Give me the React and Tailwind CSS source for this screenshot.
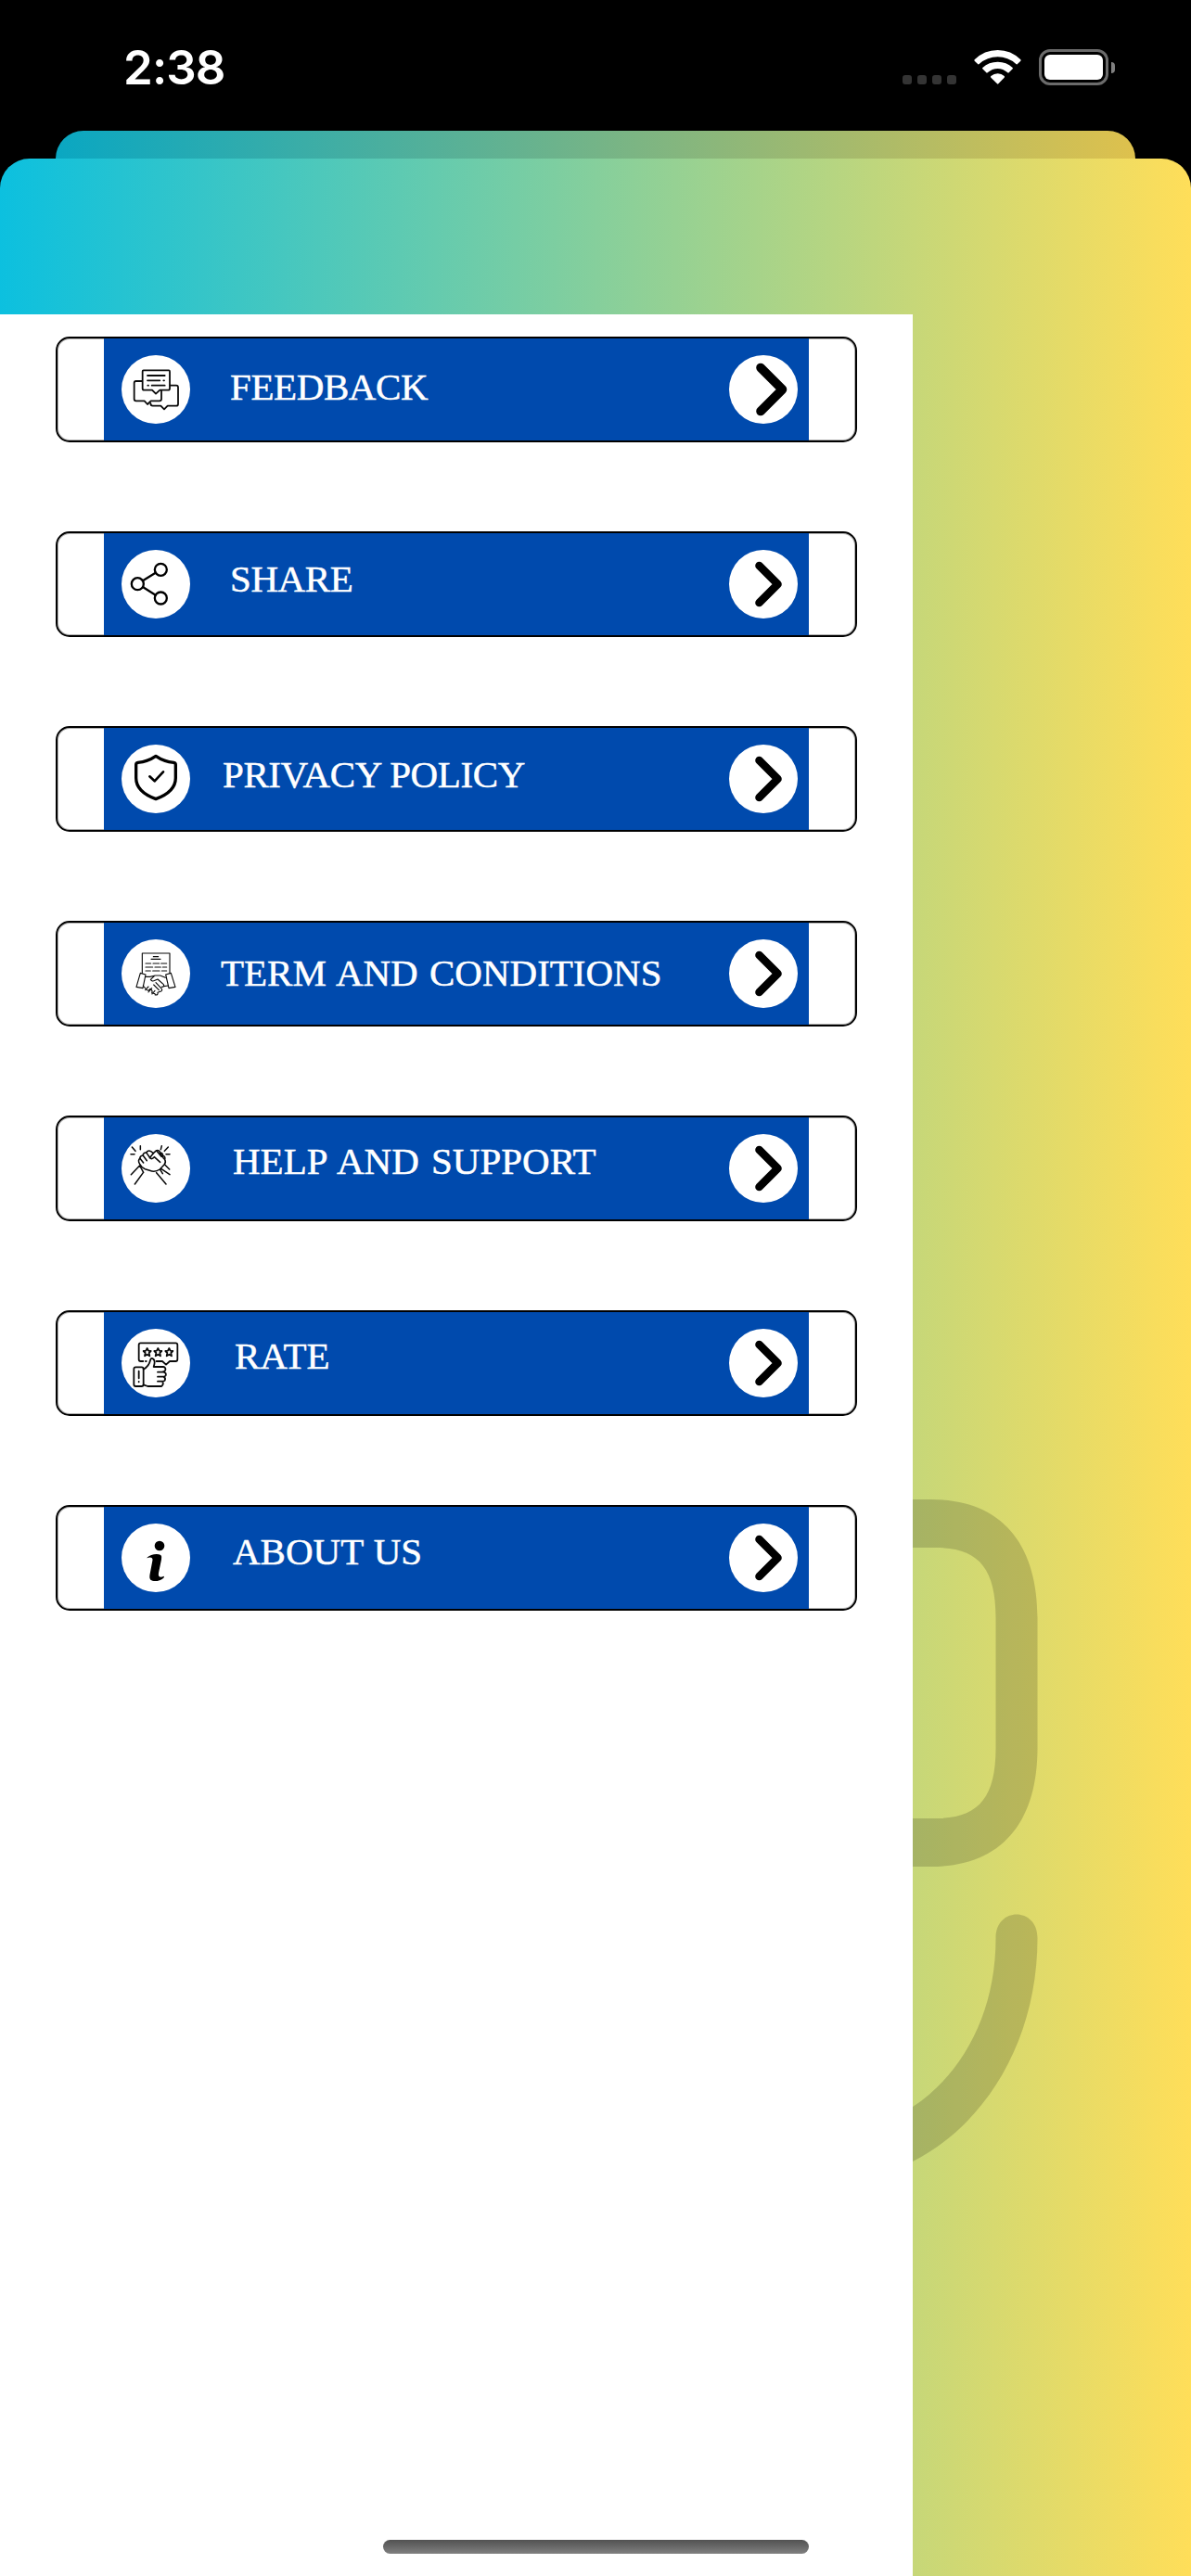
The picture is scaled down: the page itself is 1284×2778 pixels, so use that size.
const line = {
  fill: "none",
  stroke: "#0a0a0a",
  strokeWidth: 5.4,
  strokeLinecap: "round",
  strokeLinejoin: "round",
};

function FeedbackIcon() {
  return (
    <g {...line}>
      <path d="M346 147H428Q431 147 431 151V206Q431 211 426 211H399L386 223L374 211H348Q343 211 343 206V151Q343 147 346 147Z" />
      <path d="M341 182H322Q316 182 316 188V240Q316 246 322 246H349L359 257L370 246H398Q404 246 404 240V213" />
      <path d="M433 196H452Q458 196 458 202V256Q458 262 452 262H424L413 273L402 262H376Q369 262 369 254" />
      <path d="M359 164H415M359 180H399M411 180H413M360 196H362M373 196H415" />
    </g>
  );
}

function ShareIcon() {
  return (
    <g {...line} stroke="#000" strokeWidth={7}>
      <circle cx="402" cy="162" r="19.5" />
      <circle cx="327" cy="208" r="19.5" />
      <circle cx="402" cy="254" r="19.5" />
      <path d="M345 197L385 172M345 219L385 244" />
    </g>
  );
}

function PrivacyIcon() {
  return (
    <g {...line} stroke="#000" strokeWidth={10}>
      <path d="M386 135C370 146 350 154 328 156Q322 157 322 163V206C322 238 348 260 386 274C424 260 450 238 450 206V163Q450 157 444 156C422 154 402 146 386 135Z" />
      <path d="M366 201L382 216L410 186" strokeWidth={8} />
    </g>
  );
}

function TermsIcon() {
  return (
    <g {...line} strokeWidth={3.4}>
      <path d="M342 207V143H431V207" />
      <path d="M378 154H394M371 162H401M353 176H370M377 176H397M403 176H421M353 188H376M383 188H402M408 188H421M353 200H369M376 200H398M405 200H421" />
      <path d="M336 207L353 212L344 256L323 252ZM435 207L418 212L428 256L449 252Z" />
      <path d="M353 219H367L384 215H400L417 222M381 217L369 228Q373 236 383 231L392 227L411 244Q415 252 405 252M345 248L355 260Q362 268 368 258Q377 264 373 272Q385 272 384 278Q394 279 392 270L403 266Q409 262 403 256M352 262L362 251M362 269L373 256M374 275L383 264M386 238L403 256M379 245L396 262M426 248L411 250" />
    </g>
  );
}

function HelpIcon() {
  return (
    <g {...line} strokeWidth={4.6}>
      <path d="M309 140L320 153M336 136V148M305 163H317M405 136L402 148M426 140L414 153M431 163H419" />
      <path d="M334 195Q327 184 334 177Q335 168 344 167Q346 157 355 158Q361 149 370 154L378 160L388 151Q397 149 400 158Q408 158 409 168Q418 170 415 181Q420 189 413 197L399 212Q384 223 366 216L351 211Q340 207 334 195Z" />
      <path d="M336 178L346 191M345 168L357 184M356 159L368 176M378 160L366 175Q374 182 381 172L400 189M389 153L404 171M400 159L412 178" />
      <path d="M333 201L306 229M345 223L318 260M334 200L346 222M403 210L431 229M388 223L419 260M415 197L430 212M400 213L408 226" />
    </g>
  );
}

function RateIcon() {
  return (
    <g {...line}>
      <path d="M345 203H337Q331 203 331 197V150Q331 144 337 144H450Q456 144 456 150V197Q456 203 450 203H431L419 214L407 203H388M353 203H355" />
      <path d="M358 161L362 169L370 170L364 176L366 186L358 181L350 186L352 176L346 170L354 169ZM393 161L397 169L405 170L399 176L401 186L393 181L385 186L387 176L381 170L389 169ZM429 161L433 169L441 170L435 176L437 186L429 181L421 186L423 176L417 170L425 169Z" />
      <path d="M321 222H340Q346 222 346 228V278Q346 284 340 284H321Q315 284 315 278V228Q315 222 321 222ZM331 235V258M331 269V270" />
      <path d="M346 229Q364 219 368 200Q371 189 379 197Q385 203 379 221H410Q419 223 417 231Q415 238 405 238H392M411 238Q421 241 418 249Q416 253 405 253H392M411 253Q419 257 415 265Q413 268 403 268H392M407 268Q413 277 404 284H360L346 279" />
    </g>
  );
}

function AboutIcon() {
  return (
    <g fill="#000">
      <circle cx="398" cy="170" r="16" />
      <path d="M357 209C368 198 390 194 402 200Q406 204 404 214L395 258Q393 271 401 271Q407 271 412 268Q414 271 411 274C399 285 378 287 369 280Q364 275 367 261L375 219Q377 210 371 208Q365 206 358 210Z" />
    </g>
  );
}

const items = [
  { label: "FEEDBACK", Icon: FeedbackIcon, pos: "ml-[43px] mt-[32px] tracking-[-0.4px]", big: true },
  { label: "SHARE", Icon: ShareIcon, pos: "ml-[43px] mt-[29px] tracking-[-0.4px]" },
  { label: "PRIVACY POLICY", Icon: PrivacyIcon, pos: "ml-[35px] mt-[30px] tracking-[-0.4px]" },
  { label: "TERM AND CONDITIONS", Icon: TermsIcon, pos: "ml-[33px] mt-[34px] [word-spacing:2px]" },
  { label: "HELP AND SUPPORT", Icon: HelpIcon, pos: "ml-[46px] mt-[27px] [word-spacing:3px]" },
  { label: "RATE", Icon: RateIcon, pos: "ml-[48px] mt-[27px]" },
  { label: "ABOUT US", Icon: AboutIcon, pos: "ml-[46px] mt-[28px] [word-spacing:1px]" },
];

function MenuRow({ label, Icon, pos, big }) {
  return (
    <button className="flex h-[114px] w-[864px] justify-center rounded-[15px] border-2 border-black bg-white shadow-[inset_0_0_0_1px_rgba(0,0,0,0.3)]">
      <span className="flex h-[110px] w-[760px] bg-[#004aad]">
        <svg className="ml-[19px] mt-[18px] h-[74px] w-[74px] shrink-0 rounded-full bg-white" viewBox="275 98 222 222">
          <Icon />
        </svg>
        <span className={"self-start whitespace-nowrap text-[41px] leading-[41px] text-white font-['Liberation_Serif',serif] [-webkit-text-stroke:0.5px_white] " + pos}>
          {label}
        </span>
        <svg className="ml-auto mr-[12px] mt-[18px] h-[74px] w-[74px] shrink-0 rounded-full bg-white" viewBox="0 0 74 74">
          <path
            d={big ? "M34 13.5L57.5 37L34 60.5" : "M32.5 17L52.5 37L32.5 57"}
            fill="none"
            stroke="#000"
            strokeWidth={big ? 9.6 : 8.6}
            strokeLinecap="round"
            strokeLinejoin="round"
          />
        </svg>
      </span>
    </button>
  );
}

function StatusBar() {
  return (
    <header className="flex h-[141px] items-start justify-between pl-[133px] pr-[82px]">
      <span className="mt-[47px] text-[51px] font-semibold leading-[51px] tracking-[-0.9px] text-white font-['Inter',sans-serif]">2:38</span>
      <div className="mt-[53px] flex h-[39px]">
        <div className="mt-[28px] flex gap-[6px]">
          <i className="size-[10px] rounded-[3px] bg-[#343434]" />
          <i className="size-[10px] rounded-[3px] bg-[#343434]" />
          <i className="size-[10px] rounded-[3px] bg-[#343434]" />
          <i className="size-[10px] rounded-[3px] bg-[#343434]" />
        </div>
        <svg className="ml-[19px] h-[39px] w-[51px]" viewBox="330 99 153 117" fill="#fff">
          <path d="M332 133Q363 102 407 102Q450 102 481 133Q483 135 481 137L470 148Q468 149 466 147Q440 124 407 124Q373 124 347 147Q345 149 343 148L332 137Q330 135 332 133Z" />
          <path d="M358 159Q378 140 407 140Q435 140 455 159Q457 161 455 163L443 175Q441 177 439 175Q424 162 407 162Q389 162 374 175Q372 177 370 175L358 163Q356 161 358 159Z" />
          <path d="M385 186Q395 178 407 178Q419 178 428 186Q430 188 428 191L409 211Q407 213 405 211L385 191Q383 188 385 186Z" />
        </svg>
        <div className="ml-[19px] h-[39px] w-[75px] rounded-[12px] border-[3px] border-[#6b6b6b] p-[3px]">
          <div className="h-[27px] w-[63px] rounded-[6px] bg-white" />
        </div>
        <i className="ml-[3px] mt-[13.5px] h-[12px] w-[4px] rounded-r-full bg-[#808080]" />
      </div>
    </header>
  );
}

export default function App() {
  return (
    <div className="flex h-[2778px] w-[1284px] flex-col overflow-hidden bg-black">
      <StatusBar />
      <div className="mx-[60px] h-[30px] shrink-0 rounded-t-[30px] bg-[linear-gradient(to_right,#0aa7c2,#dec14d)]" />
      <main className="relative flex-1 rounded-t-[32px] bg-[linear-gradient(to_right,#0cc0df,#ffde59)] pt-[168px]">
        <svg className="absolute left-[984px] top-[1429px] h-[760px] w-[150px]" viewBox="984 1600 150 760" fill="#000" fillOpacity="0.165">
          <path d="M984 1617H1004C1080 1617 1118.5 1665 1118.5 1745V1885C1118.5 1965 1080 2013 1004 2013H984V1961H1008C1054 1961 1073.5 1940 1073.5 1885V1745C1073.5 1690 1054 1669 1008 1669H984Z" />
          <path d="M1073.5 2090C1073.5 2056 1118.5 2056 1118.5 2090C1118.5 2200 1063 2291 984 2331V2272C1037 2237 1073.5 2172 1073.5 2090Z" />
        </svg>
        <aside className="relative flex h-[2439px] w-[984px] flex-col gap-[96px] bg-white pl-[60px] pt-[24px]">
          {items.map((item) => (
            <MenuRow key={item.label} {...item} />
          ))}
        </aside>
        <div className="absolute bottom-[24px] left-[413px] h-[15px] w-[459px] rounded-full bg-linear-to-b from-[#525252] to-[#808080]" />
      </main>
    </div>
  );
}
